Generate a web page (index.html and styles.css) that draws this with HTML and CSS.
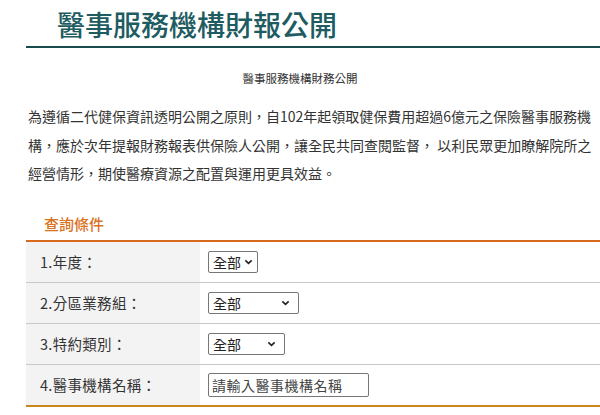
FILE: index.html
```html
<!DOCTYPE html>
<html lang="zh-Hant">
<head>
<meta charset="utf-8">
<title>醫事服務機構財報公開</title>
<link rel="stylesheet" href="styles.css">
</head>
<body>
<div class="page">
  <h1 class="title">醫事服務機構財報公開</h1>
  <div class="subtitle">醫事服務機構財務公開</div>
  <p class="intro">為遵循二代健保資訊透明公開之原則，自102年起領取健保費用超過6億元之保險醫事服務機構，應於次年提報財務報表供保險人公開，讓全民共同查閱監督， 以利民眾更加瞭解院所之經營情形，期使醫療資源之配置與運用更具效益。</p>
  <h2 class="section">查詢條件</h2>
  <div class="form">
    <div class="row">
      <div class="label">1.年度：</div>
      <div class="field"><span class="sel w1">全部<svg viewBox="0 0 10 6"><path d="M1.5 1.2 5 4.6 8.5 1.2" /></svg></span></div>
    </div>
    <div class="row">
      <div class="label">2.分區業務組：</div>
      <div class="field"><span class="sel w2">全部<svg viewBox="0 0 10 6"><path d="M1.5 1.2 5 4.6 8.5 1.2" /></svg></span></div>
    </div>
    <div class="row">
      <div class="label">3.特約類別：</div>
      <div class="field"><span class="sel w3">全部<svg viewBox="0 0 10 6"><path d="M1.5 1.2 5 4.6 8.5 1.2" /></svg></span></div>
    </div>
    <div class="row">
      <div class="label">4.醫事機構名稱：</div>
      <div class="field"><span class="input">請輸入醫事機構名稱</span></div>
    </div>
  </div>
</div>
</body>
</html>
```
FILE: styles.css
```css
html, body {
  margin: 0;
  padding: 0;
  background: #fff;
}
body {
  font-family: "Noto Sans CJK TC", "Noto Sans", sans-serif;
  color: #333;
  width: 600px;
  height: 415px;
  overflow: hidden;
}
.page {
  padding-left: 26px;
}
.title {
  margin: 0;
  padding: 5px 0 0 31px;
  height: 41px;
  font-size: 28px;
  line-height: 38px;
  font-weight: 500;
  color: #1e5c62;
  border-bottom: 2px solid #1a4a4c;
}
.subtitle {
  margin-top: 21px;
  padding-right: 26px;
  text-align: center;
  font-size: 11.5px;
  line-height: 18px;
  color: #333;
}
.intro {
  margin: 15px 0 0 2px;
  font-size: 14px;
  line-height: 28.5px;
  color: #333;
}
.section {
  margin: 25px 0 0 0;
  padding-left: 18px;
  font-size: 15px;
  font-weight: 500;
  line-height: 22px;
  color: #d9731f;
  height: 27px;
}
.form {
  border-top: 2px solid #d86a1e;
  border-bottom: 2px solid #c9861e;
}
.row {
  display: flex;
  height: 40px;
  border-bottom: 1px solid #c8c8c8;
}
.row:last-child {
  border-bottom: 0;
}
.label {
  width: 160px;
  padding-left: 14px;
  background: #f3f3f3;
  display: flex;
  align-items: center;
  font-size: 14.5px;
  color: #333;
  letter-spacing: 0.3px;
}
.field {
  flex: 1;
  display: flex;
  align-items: center;
  padding-left: 8px;
}
.sel {
  box-sizing: border-box;
  height: 22px;
  border: 1px solid #767676;
  border-radius: 2px;
  display: flex;
  align-items: center;
  justify-content: space-between;
  padding: 0 4px 0 4px;
  font-size: 14px;
  color: #222;
  background: #fff;
}
.sel svg {
  width: 9px;
  height: 6px;
  fill: none;
  stroke: #222;
  stroke-width: 1.8;
}
.w1 { width: 50px; }
.w2 { width: 91px; padding-right: 8px; }
.w3 { width: 77px; padding-right: 8px; }
.input {
  box-sizing: border-box;
  width: 161px;
  height: 24px;
  border: 1px solid #767676;
  border-radius: 2px;
  display: flex;
  align-items: center;
  padding-left: 3px;
  font-size: 14px;
  color: #444;
  letter-spacing: 0.5px;
}
```
